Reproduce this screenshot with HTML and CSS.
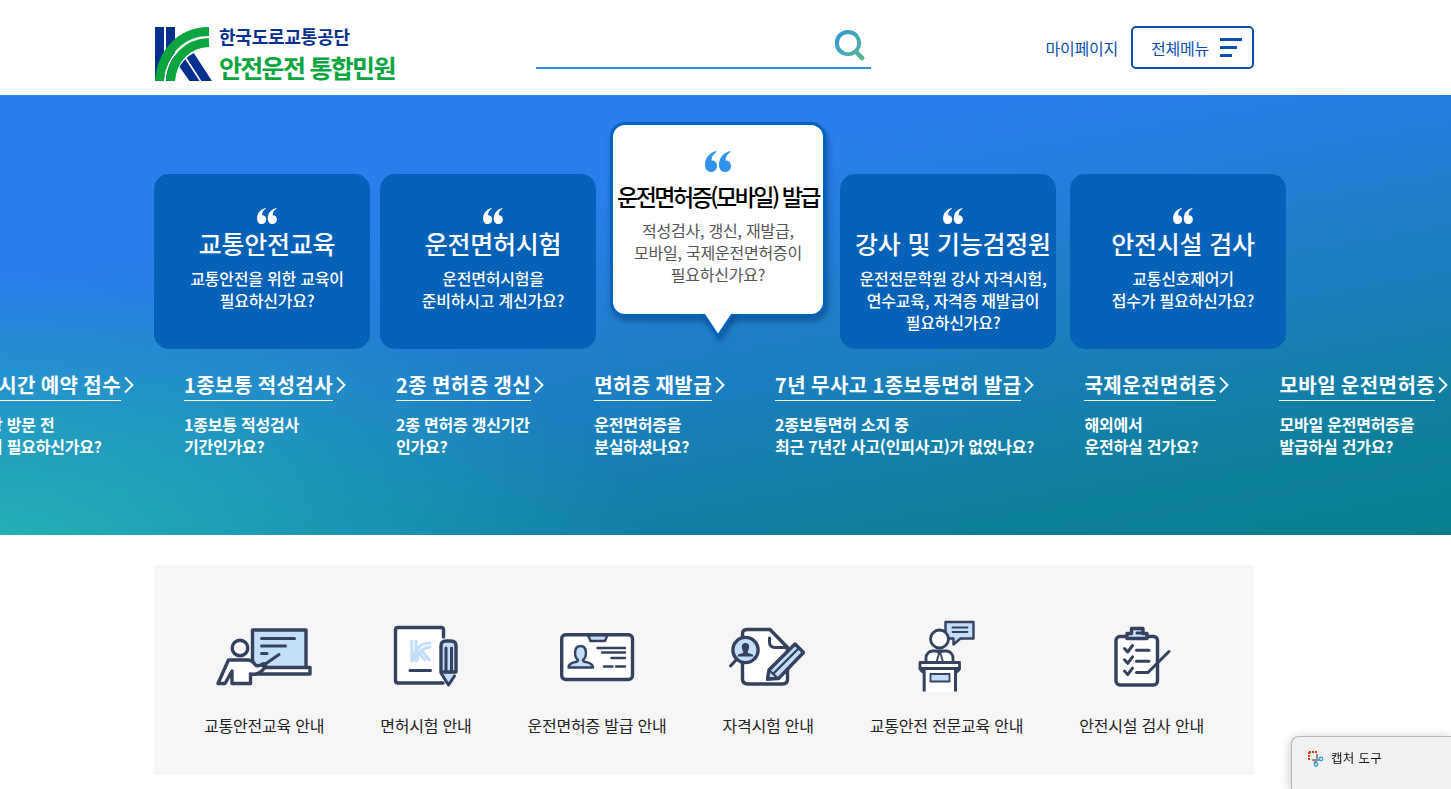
FILE: index.html
```html
<!DOCTYPE html>
<html lang="ko">
<head>
    <meta charset="UTF-8">
    <meta name="viewport" content="width=device-width, initial-scale=1.0">
    <title>안전운전 통합민원</title>
    <link rel="stylesheet" href="styles.css">
</head>
<body>
    <svg class="defs" width="0" height="0">
        <symbol id="quote" viewBox="0 0 26 21">
            <path d="M11 0C4 2 0 7 0 14c0 4 2.500 7 6 7s6-2.500 6-6-2.300-5.500-5.500-5.500C6.500 6 8 3 11.500 1zM25 0C18 2 14 7 14 14c0 4 2.500 7 6 7s6-2.500 6-6-2.300-5.500-5.500-5.500C20.500 6 22 3 25.500 1z"/>
        </symbol>
        <symbol id="arrow" viewBox="0 0 10 18">
            <path d="M1 1.500 8.500 9 1 16.500" fill="none" stroke="#fff" stroke-width="1.800"/>
        </symbol>
    </svg>

    <header class="header">
        <a class="logo" href="#">
            <svg class="logo-mark" viewBox="155 27 57 54">
                <path fill="#06308f" d="M155 27h9v54h-9zM166 27h9v54h-9zM174 59l8-5 17.500 27h-10zM183.500 53l7-5 21.500 33h-10.500z"/>
                <path fill="#fff" d="M164 81c1-24 20-44 45-44v2c-24 0-42 18-43 42zM174 81c2-20 15-33 35-34v2c-18 1-32 14-34 32z"/>
                <path fill="none" stroke="#0aa53f" stroke-width="9" d="M159.500 81c2-28 21-49.500 49.500-49.500M170.500 81c2-22 16-37.500 38.500-38.500"/>
            </svg>
            <span class="logo-text">
                <span class="logo-org">한국도로교통공단</span>
                <span class="logo-site">안전운전 통합민원</span>
            </span>
        </a>
        <div class="search">
            <svg class="search-icon" viewBox="0 0 32 32">
                <defs>
                    <linearGradient id="sg" x1="0" y1="0" x2="1" y2="1">
                        <stop offset="0" stop-color="#3295dc"/>
                        <stop offset="1" stop-color="#56bb90"/>
                    </linearGradient>
                </defs>
                <path fill="url(#sg)" fill-rule="evenodd" d="M13.500 0a13.500 13.500 0 0 1 10.700 21.600l5.500 5.700a2.300 2.300 0 0 1-3.400 3.300l-5.600-5.900A13.500 13.500 0 1 1 13.500 0zm0 4a9.500 9.500 0 1 0 0 19 9.500 9.500 0 0 0 0-19z"/>
            </svg>
        </div>
        <nav class="util">
            <a href="#">마이페이지</a>
            <button class="menu-btn">전체메뉴
                <span class="bars"><i></i><i></i><i></i></span>
            </button>
        </nav>
    </header>

    <section class="hero">
        <div class="cards">
            <div class="card">
                <svg class="quote"><use href="#quote"/></svg>
                <h2>교통안전교육</h2>
                <p>교통안전을 위한 교육이<br>필요하신가요?</p>
            </div>
            <div class="card">
                <svg class="quote"><use href="#quote"/></svg>
                <h2>운전면허시험</h2>
                <p>운전면허시험을<br>준비하시고 계신가요?</p>
            </div>
            <div class="card active">
                <svg class="quote"><use href="#quote"/></svg>
                <h2>운전면허증(모바일) 발급</h2>
                <p>적성검사, 갱신, 재발급,<br>모바일, 국제운전면허증이<br>필요하신가요?</p>
                <svg class="tail" viewBox="0 0 32 28">
                    <path fill="#0062bb" d="M0 3 16 28 32 3z"/>
                    <path fill="#fff" d="M3 0v3L16 22.500 29 3V0z"/>
                </svg>
            </div>
            <div class="card">
                <svg class="quote"><use href="#quote"/></svg>
                <h2>강사 및 기능검정원</h2>
                <p>운전전문학원 강사 자격시험,<br>연수교육, 자격증 재발급이<br>필요하신가요?</p>
            </div>
            <div class="card">
                <svg class="quote"><use href="#quote"/></svg>
                <h2>안전시설 검사</h2>
                <p>교통신호제어기<br>접수가 필요하신가요?</p>
            </div>
        </div>

        <div class="slides">
            <div class="slide first">
                <h3><a href="#">실시간 예약 접수</a><svg class="arrow"><use href="#arrow"/></svg></h3>
                <p>시험장 방문 전<br>예약이 필요하신가요?</p>
            </div>
            <div class="slide">
                <h3><a href="#">1종보통 적성검사</a><svg class="arrow"><use href="#arrow"/></svg></h3>
                <p>1종보통 적성검사<br>기간인가요?</p>
            </div>
            <div class="slide">
                <h3><a href="#">2종 면허증 갱신</a><svg class="arrow"><use href="#arrow"/></svg></h3>
                <p>2종 면허증 갱신기간<br>인가요?</p>
            </div>
            <div class="slide">
                <h3><a href="#">면허증 재발급</a><svg class="arrow"><use href="#arrow"/></svg></h3>
                <p>운전면허증을<br>분실하셨나요?</p>
            </div>
            <div class="slide">
                <h3><a href="#">7년 무사고 1종보통면허 발급</a><svg class="arrow"><use href="#arrow"/></svg></h3>
                <p>2종보통면허 소지 중<br>최근 7년간 사고(인피사고)가 없었나요?</p>
            </div>
            <div class="slide">
                <h3><a href="#">국제운전면허증</a><svg class="arrow"><use href="#arrow"/></svg></h3>
                <p>해외에서<br>운전하실 건가요?</p>
            </div>
            <div class="slide">
                <h3><a href="#">모바일 운전면허증</a><svg class="arrow"><use href="#arrow"/></svg></h3>
                <p>모바일 운전면허증을<br>발급하실 건가요?</p>
            </div>
        </div>
    </section>

    <section class="guide">
        <a class="guide-item" href="#">
            <svg class="icon" width="100" height="80" viewBox="213.500 615 100 80">
                <path class="sky" d="M252 630h53.500v38H252z"/>
                <path class="paper" d="M250 667.500h59.500v6.500H250z"/>
                <path class="line" d="M261 638.500h33M261 646h24M261 653.500h5.500"/>
                <circle class="paper" cx="239.500" cy="648" r="7.800"/>
                <path class="paper" d="M228 660h19c4 0 6 2 8 5 2 2 5 0 7-1 3-1 4 2 2 4-3 4-8 7-14 6v9.500h-18.500V671l-7 12.500h-7z"/>
                <path class="line" d="m262 666 16.500-11.500"/>
            </svg>
            <span>교통안전교육 안내</span>
        </a>
        <a class="guide-item" href="#">
            <svg class="icon" width="66" height="80" viewBox="392 615 66 80">
                <path class="paper" d="M442.500 637v-7q0-2.500-2.500-2.500h-43q-2.500 0-2.500 2.500v50.500q0 2.500 2.500 2.500h45"/>
                <g class="mark">
                    <path d="M410.800 641v20M415 641v20M416 651l8 9M420 650l8.500 10"/>
                    <path d="M412 660c1-10 7-17 17-17M416 660c1-7 5-12 13-13"/>
                </g>
                <path class="line" d="M409 670.500h20.500"/>
                <path fill="#c3defa" d="M440 673h15l-7.500 13z"/>
                <path class="sky" d="M440 672v-26q0-5 5-5h5q5 0 5 5v26z"/>
                <path class="line" d="M445 648v24M450.500 648v24M440 673l7.500 12 6-9"/>
            </svg>
            <span>면허시험 안내</span>
        </a>
        <a class="guide-item" href="#">
            <svg class="icon" width="76" height="80" viewBox="558 615 76 80">
                <rect class="paper" x="560.700" y="634.700" width="70.800" height="44.800" rx="4"/>
                <path class="sky thin" d="m587 635 2.500 6h14.500l2.500-6z"/>
                <path fill="#34425f" d="M586 633.500h21v3h-21z"/>
                <path class="sky thin" d="M577 660c-4-3-4.500-14 2.500-14s6.500 11 2.500 14c-1 3 10 1 10 7.500h-24.500c0-6.500 10.500-4.500 9.500-7.500z"/>
                <path class="line thin" d="M596.500 648H624M601 652.500h23M610.500 658H624M603 666.500h8.500M615 666.500h9"/>
            </svg>
            <span>운전면허증 발급 안내</span>
        </a>
        <a class="guide-item" href="#">
            <svg class="icon" width="80" height="80" viewBox="728 615 80 80">
                <path class="paper" d="M742.500 642v-8q0-4.500 4.500-4.500h23l17.500 18V679q0 5-5 5H748q-5.500 0-5.500-5z"/>
                <path class="line" d="M769.500 638v4q0 5.500 5.500 5.500h12"/>
                <circle class="sky" cx="745.500" cy="650" r="12.600"/>
                <path class="line" d="m736 660-5.500 6"/>
                <path fill="#34425f" d="M745.500 643c5 0 4 6 2 9 0 2 6 1 6 4.500h-16c0-3.500 6-2.500 6-4.500-2-3-3-9 2-9z"/>
                <path class="sky" d="m767.500 679 1.500-9 26-26 8.500 8.500-25 26z"/>
                <path class="line thin" d="m773 674 26-26M769 670l9.500 9"/>
                <path fill="#34425f" d="m766 681 1-6 6 5z"/>
            </svg>
            <span>자격시험 안내</span>
        </a>
        <a class="guide-item" href="#">
            <svg class="icon" width="58" height="80" viewBox="917.500 615 58 80">
                <path class="sky thin" d="M945 622h28v16.500h-13l-7 6v-6h-8z"/>
                <path class="line fine" d="M952 627.500h15M952 632h15"/>
                <circle class="paper slim" cx="939" cy="639" r="9"/>
                <path class="paper slim" d="M925.500 662v-4c0-4 3-7 7-7h13c4 0 7 3 7 7v4"/>
                <path class="line fine" d="m936 651 3 3 3-3M938 655l-2 7M940.500 655l2 7"/>
                <path fill="#fff" d="M924 668h31v23.500h-31z"/>
                <path class="paper slim" d="M919.500 662.500h39.500v6H919.500z"/>
                <path class="line square" d="M919.500 667.500q0 3 4 5M959 667.500q0 3-4 5M923.700 670v21.500M955 670v21.500"/>
                <path class="sky fine" d="M930 674h19v7.500h-19z"/>
            </svg>
            <span>교통안전 전문교육 안내</span>
        </a>
        <a class="guide-item" href="#">
            <svg class="icon" width="58" height="80" viewBox="1113 615 58 80">
                <rect class="paper" x="1116" y="636.500" width="41.500" height="48.500" rx="4"/>
                <path class="sky" d="M1127 633.500h4.500v-5h11.500v5h4v5h-20z"/>
                <path class="line" d="M1137 633h5M1136.500 650.300h12.500M1136.500 661.300h12.500M1136.500 672.500h11.500l21-21"/>
                <path class="line" d="m1124.500 648.500 3.200 3.500 4.800-6.500M1124.500 659.800l3.200 3.500 4.800-6.500M1124.500 671.100l3.200 3.500 4.800-6.500"/>
            </svg>
            <span>안전시설 검사 안내</span>
        </a>
    </section>

    <div class="capture">
        <svg width="16" height="16" viewBox="0 0 16 16">
            <path d="M1 1h8M1 1v9" fill="none" stroke="#d83b01" stroke-width="2" stroke-dasharray="2 1"/>
            <path d="M9 3v6l-3 3M4 9h8" fill="none" stroke="#8d8d8d" stroke-width="2"/>
            <circle cx="13" cy="8" r="1.700" fill="none" stroke="#2aa5e0" stroke-width="1.400"/>
            <circle cx="8" cy="13.500" r="1.700" fill="none" stroke="#2aa5e0" stroke-width="1.400"/>
        </svg>
        <span>캡처 도구</span>
    </div>
</body>
</html>
```

FILE: styles.css
```css
* { box-sizing: border-box; }

body {
    margin: 0;
    height: 789px;
    overflow: hidden;
    background: #fff;
    color: #222;
    font-family: "Noto Sans CJK KR", "Noto Sans", sans-serif;
    font-size: 16px;
    letter-spacing: -0.220px;
}
a { color: inherit; text-decoration: none; }
h2, h3, p { margin: 0; }
svg { flex: none; }
.defs { display: block; }

/* header */
.header {
    display: flex;
    align-items: flex-start;
    width: 1254px;
    height: 95px;
    padding: 26px 0 0 155px;
}
.logo { display: flex; width: 381px; }
.logo-mark { width: 57px; height: 54px; margin-top: 1px; }
.logo-text {
    display: flex;
    flex-direction: column;
    padding-left: 7px;
    font-weight: 700;
    white-space: nowrap;
}
.logo-org {
    color: #06308f;
    font-size: 18px;
    line-height: 20px;
    letter-spacing: -0.2px;
}
.logo-site {
    margin-top: 5px;
    color: #0aa53f;
    font-size: 25px;
    line-height: 32px;
    letter-spacing: -1.7px;
}
.search {
    display: flex;
    justify-content: flex-end;
    width: 335px;
    height: 43px;
    padding: 4px 5px 0 0;
    border-bottom: 2px solid #2f8de4;
}
.search-icon { width: 31px; height: 31px; }
.util {
    display: flex;
    align-items: center;
    gap: 13px;
    margin-left: auto;
    color: #0b50b0;
}
.menu-btn {
    display: flex;
    align-items: center;
    gap: 11px;
    width: 123px;
    height: 43px;
    padding: 0 10px 0 18px;
    border: 2px solid #0b50b0;
    border-radius: 5px;
    background: #fff;
    color: inherit;
    font: inherit;
    letter-spacing: inherit;
    white-space: nowrap;
}
.bars { display: flex; flex-direction: column; gap: 5px; }
.bars i { width: 22px; height: 3px; background: #0b50b0; }
.bars i:nth-child(2) { width: 17px; }
.bars i:nth-child(3) { width: 12px; }

/* hero */
.hero {
    height: 440px;
    padding-top: 27px;
    overflow: hidden;
    color: #fff;
    background:
        radial-gradient(ellipse 640px 260px at 0 100%, rgba(37, 178, 181, .95), rgba(37, 178, 181, 0)),
        linear-gradient(170deg, #2980ec 0%, #2980ec 27%, #1c7fc6 56%, #0e809c 84%, #097f8e 100%);
}
.cards {
    display: flex;
    align-items: flex-start;
    height: 250px;
    margin-left: 154px;
}
.card {
    display: flex;
    flex-direction: column;
    align-items: center;
    flex: none;
    width: 216px;
    height: 175px;
    margin: 52px 10px 0 0;
    padding: 34px 0 0 10px;
    border-radius: 15px;
    text-align: center;
    white-space: nowrap;
    background: linear-gradient(135deg, #0a66bb 25%, #005db4 25%, #005db4 50%, #0a66bb 50%, #0a66bb 75%, #005db4 75%) 0 0 / 4px 4px;
}
.card .quote { width: 20px; height: 16px; fill: #fff; }
.card h2 {
    margin-top: 1px;
    font-size: 25px;
    font-weight: 500;
    line-height: 37px;
}
.card p { margin-top: 5px; font-weight: 500; line-height: 22px; }
.card.active {
    position: relative;
    height: 195px;
    margin: 0 14px 0 4px;
    padding: 26px 0 0;
    border: 3px solid #0062bb;
    background: #fff;
    color: #000;
    box-shadow: 2px 4px 6px rgba(0, 30, 80, .4);
}
.card.active .quote { width: 26px; height: 21px; fill: #2f93ee; }
.card.active h2 { margin-top: 5px; font-size: 23px; line-height: 38px; letter-spacing: -2.5px; }
.card.active p { margin-top: 4px; color: #555; font-weight: 400; }
.card.active + .card { margin-right: 14px; }
.tail {
    position: absolute;
    top: 186px;
    left: 89px;
    width: 32px;
    height: 28px;
    filter: drop-shadow(2px 4px 3px rgba(0, 30, 80, .4));
}

.slides { display: flex; gap: 50px; width: max-content; }
.slide { white-space: nowrap; }
.slide.first { width: 175px; margin-left: -41px; }
.slide.first h3 { justify-content: flex-end; }
.slide h3 {
    display: flex;
    align-items: flex-start;
    gap: 3px;
    margin-top: -1px;
    font-size: 20px;
    font-weight: 700;
    line-height: 28px;
    letter-spacing: .45px;
    word-spacing: -1.2px;
}
.slide h3 a { padding-bottom: 1px; border-bottom: 1px solid #fff; }
.arrow { width: 10px; height: 18px; margin-top: 5px; }
.slide p { margin-top: 12px; font-weight: 700; line-height: 22px; }

/* guide menu */
.guide {
    display: flex;
    gap: 56px;
    width: 1100px;
    height: 210px;
    margin: 30px 0 0 154px;
    padding: 50px 0 0 50px;
    background: #f6f6f6;
}
.guide-item {
    display: flex;
    flex-direction: column;
    align-items: center;
    white-space: nowrap;
}
.guide-item span { margin-top: 18px; line-height: 24px; }
.icon * { stroke-linejoin: round; stroke-linecap: round; }
.paper { fill: #fff; stroke: #34425f; stroke-width: 3.4; }
.sky { fill: #c3defa; stroke: #34425f; stroke-width: 3.4; }
.line { fill: none; stroke: #34425f; stroke-width: 3; }
.mark { fill: none; stroke: #c3defa; stroke-width: 3; }
.icon .slim { stroke-width: 2.8; }
.icon .thin { stroke-width: 2.4; }
.icon .fine { stroke-width: 1.8; }
.icon .square { stroke-linecap: butt; }

/* capture tool preview */
.capture {
    position: fixed;
    right: 0;
    bottom: 0;
    display: flex;
    gap: 7px;
    width: 160px;
    height: 53px;
    padding: 14px 0 0 16px;
    border: 1px solid #b5b5b5;
    border-width: 1px 0 0 1px;
    border-radius: 8px 0 0 0;
    background: #f1f1f1;
    box-shadow: 0 2px 12px rgba(0, 0, 0, .25);
    color: #111;
    font-size: 12.5px;
    line-height: 14px;
    letter-spacing: .3px;
}
```
